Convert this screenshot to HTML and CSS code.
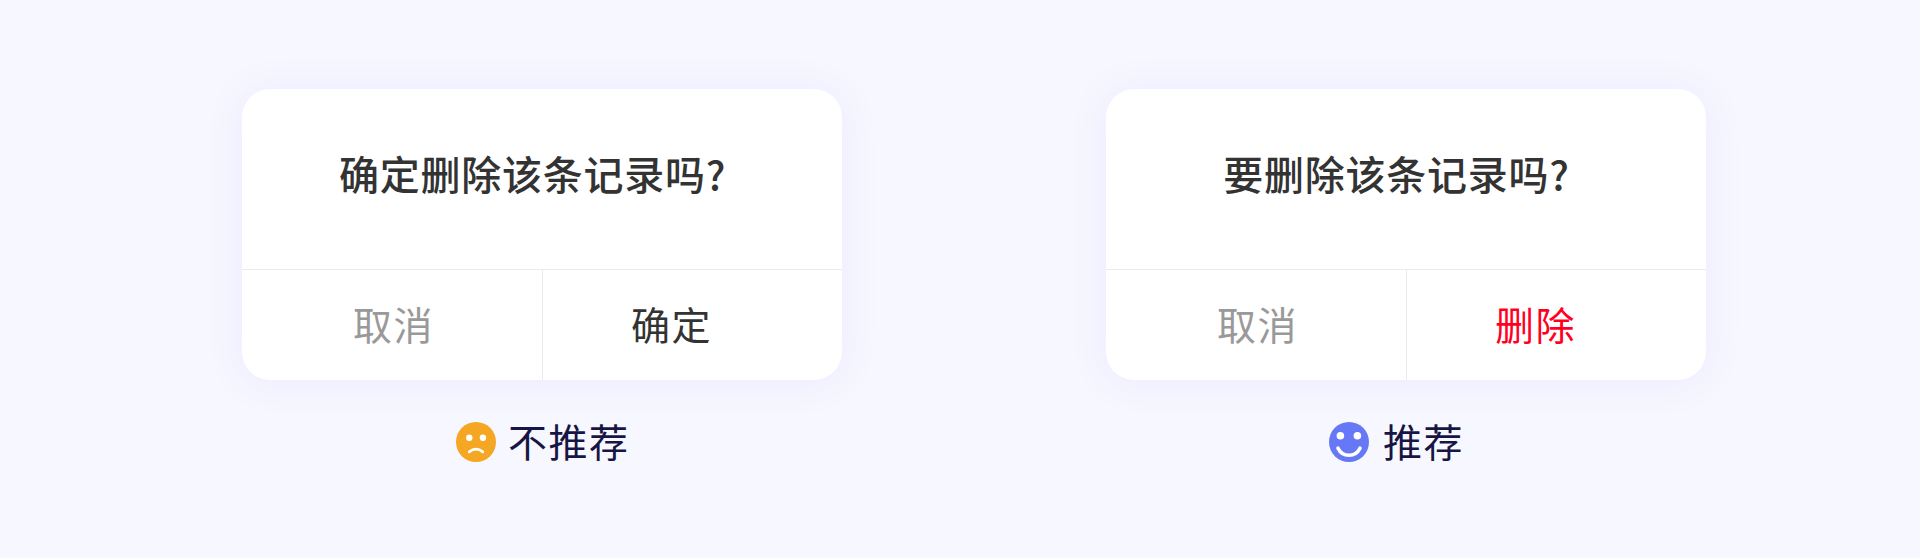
FILE: index.html
```html
<!DOCTYPE html>
<html lang="zh-CN">
<head>
<meta charset="utf-8">
<title>删除确认</title>
<link rel="stylesheet" href="styles.css">
</head>
<body>
<main class="examples">
  <section class="example">
    <div class="dialog">
      <h2 class="title">确定删除该条记录吗?</h2>
      <div class="actions">
        <button class="action cancel">取消</button>
        <button class="action">确定</button>
      </div>
    </div>
    <div class="verdict">
      <svg class="face" viewBox="0 0 40 40">
        <circle cx="20" cy="20" r="20" fill="#f5a623"/>
        <circle cx="13.3" cy="15.8" r="3.2" fill="#fff"/>
        <circle cx="26.9" cy="15.8" r="3.2" fill="#fff"/>
        <path d="M13.2 29.9Q20 24.3 26.8 29.9" fill="none" stroke="#fff" stroke-width="2.7" stroke-linecap="round"/>
      </svg>
      <span class="label">不推荐</span>
    </div>
  </section>
  <section class="example">
    <div class="dialog">
      <h2 class="title">要删除该条记录吗?</h2>
      <div class="actions">
        <button class="action cancel">取消</button>
        <button class="action danger">删除</button>
      </div>
    </div>
    <div class="verdict good">
      <svg class="face" viewBox="0 0 40 40">
        <circle cx="20" cy="20" r="20" fill="#6678f6"/>
        <circle cx="11.4" cy="13.8" r="3.8" fill="#fff"/>
        <circle cx="28.4" cy="13.8" r="3.8" fill="#fff"/>
        <path d="M9 26.2C13.5 35.6 26.5 35.6 31 26.2" fill="none" stroke="#fff" stroke-width="3.6" stroke-linecap="round"/>
      </svg>
      <span class="label">推荐</span>
    </div>
  </section>
</main>
</body>
</html>
```
FILE: styles.css
```css
* { box-sizing: border-box; }
body {
  margin: 0;
  height: 558px;
  background: #f7f7ff;
  font-family: "Noto Sans CJK SC", sans-serif;
  font-size: 39px;
  letter-spacing: 1.5px;
  overflow: hidden;
}
.examples {
  display: flex;
  gap: 264px;
  padding: 89px 0 0 242px;
}
.example { width: 600px; }
.dialog {
  height: 291px;
  border-radius: 28px;
  background: #fff;
  box-shadow: 0 2px 40px rgba(98, 70, 255, 0.075);
  overflow: hidden;
}
.title {
  height: 180px;
  margin: 0;
  padding: 54px 19px 0 0;
  line-height: 60px;
  font-size: 40px;
  letter-spacing: 0.75px;
  font-weight: 500;
  color: #333;
  text-align: center;
}
.actions {
  display: flex;
  height: 111px;
  border-top: 1px solid #ebebeb;
}
.action {
  flex: 1;
  padding: 0 42px 4px 0;
  border: 0;
  background: none;
  font: inherit;
  letter-spacing: inherit;
  color: #333;
}
.cancel {
  flex: 0 0 301px;
  padding: 0 0 4px 3px;
  border-right: 1px solid #ebebeb;
  color: #999;
}
.danger { color: #ff001f; }
.verdict {
  display: flex;
  align-items: center;
  gap: 12px;
  height: 60px;
  margin-top: 32px;
  padding-left: 214px;
  color: #171543;
}
.good { padding-left: 223px; gap: 14px; }
.face { width: 40px; height: 40px; }
.label { padding-bottom: 5px; }
```
